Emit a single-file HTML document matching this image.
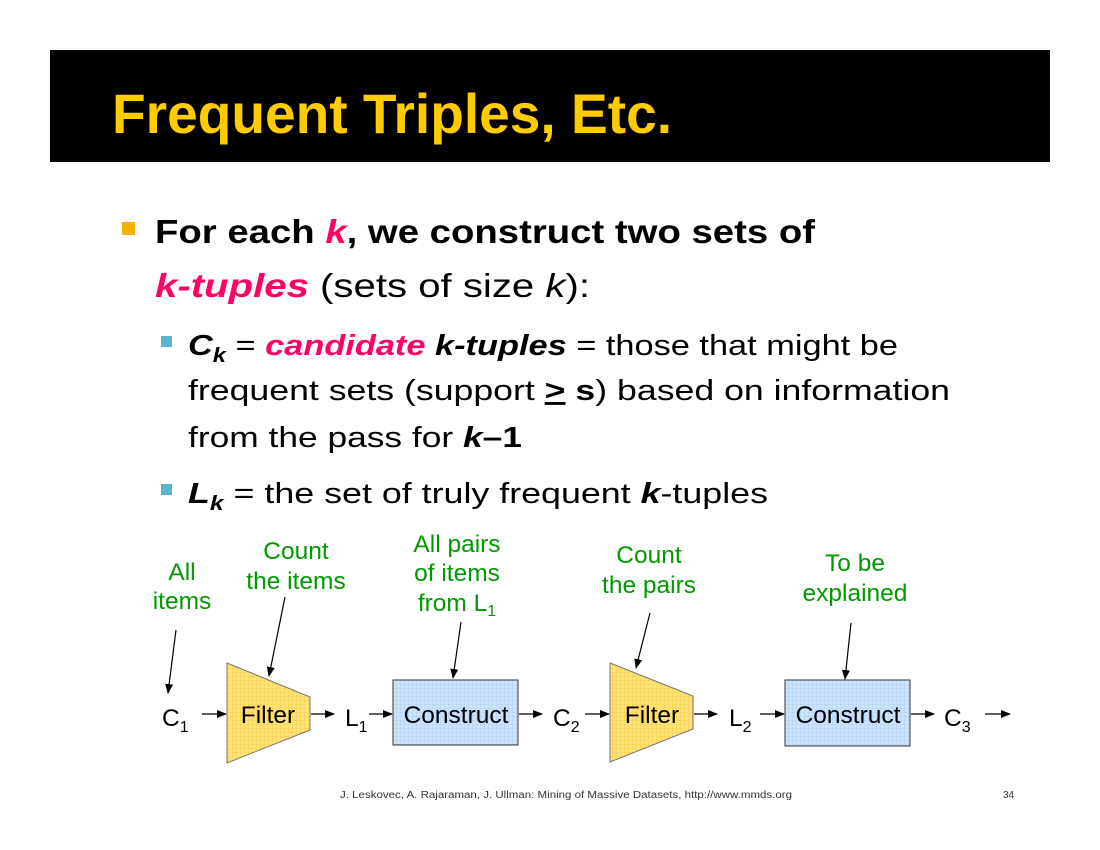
<!DOCTYPE html>
<html><head><meta charset="utf-8"><style>
html,body{margin:0;padding:0;background:#fff;}
svg{display:block;font-family:"Liberation Sans",sans-serif;}
</style></head><body>
<svg width="1100" height="850" viewBox="0 0 1100 850" xmlns="http://www.w3.org/2000/svg">
<defs>
<pattern id="gy" width="4" height="4" patternUnits="userSpaceOnUse"><rect width="4" height="4" fill="#FFE27A"/><path d="M0 0H4M0 0V4" stroke="#F2C230" stroke-width="0.6"/></pattern>
<pattern id="gb" width="4" height="4" patternUnits="userSpaceOnUse"><rect width="4" height="4" fill="#CDE3FB"/><path d="M0 0H4M0 0V4" stroke="#9CC4F0" stroke-width="0.6"/></pattern>
<marker id="ar" markerWidth="10" markerHeight="8" refX="9" refY="4" orient="auto" markerUnits="userSpaceOnUse"><path d="M0 0L10 4L0 8z" fill="#000"/></marker>
</defs>
<rect x="50" y="50" width="1000" height="112" fill="#000"/>
<text x="112" y="133" font-size="56" font-weight="bold" fill="#FFCC00" textLength="560" lengthAdjust="spacingAndGlyphs">Frequent Triples, Etc.</text>

<rect x="122" y="222" width="13" height="13" fill="#F2B200"/>
<text x="155" y="243" font-size="33" font-weight="bold" textLength="660" lengthAdjust="spacingAndGlyphs">For each <tspan fill="#FF0066" font-style="italic">k</tspan>, we construct two sets of</text>
<text x="155" y="297" font-size="33" textLength="435" lengthAdjust="spacingAndGlyphs"><tspan fill="#FF0066" font-style="italic" font-weight="bold">k-tuples</tspan>  (sets of size <tspan font-style="italic">k</tspan>):</text>

<rect x="161" y="336" width="11" height="11" fill="#5BB4CF"/>
<text x="188" y="355" font-size="29" textLength="710" lengthAdjust="spacingAndGlyphs"><tspan font-weight="bold" font-style="italic">C<tspan font-size="20" dy="7">k</tspan></tspan><tspan dy="-7"> = </tspan><tspan fill="#FF0066" font-weight="bold" font-style="italic">candidate</tspan> <tspan font-weight="bold" font-style="italic">k-tuples</tspan> = those that might be</text>
<text x="188" y="400" font-size="29" textLength="762" lengthAdjust="spacingAndGlyphs">frequent sets (support <tspan font-weight="bold" text-decoration="underline">&gt;</tspan> <tspan font-weight="bold">s</tspan>) based on information</text>
<text x="188" y="447" font-size="29" textLength="334" lengthAdjust="spacingAndGlyphs">from the pass for <tspan font-weight="bold" font-style="italic">k</tspan><tspan font-weight="bold">–1</tspan></text>

<rect x="161" y="484" width="11" height="11" fill="#5BB4CF"/>
<text x="188" y="503" font-size="29" textLength="580" lengthAdjust="spacingAndGlyphs"><tspan font-weight="bold" font-style="italic">L<tspan font-size="20" dy="7">k</tspan></tspan><tspan dy="-7"> = the set of truly frequent </tspan><tspan font-weight="bold" font-style="italic">k</tspan>-tuples</text>

<g font-size="24.5" fill="#009900" text-anchor="middle">
<text x="182" y="580">All</text><text x="182" y="609">items</text>
<text x="296" y="559">Count</text><text x="296" y="589">the items</text>
<text x="457" y="552">All pairs</text><text x="457" y="581">of items</text><text x="457" y="611">from L<tspan font-size="16" dy="5">1</tspan></text>
<text x="649" y="563">Count</text><text x="649" y="593">the pairs</text>
<text x="855" y="571">To be</text><text x="855" y="601">explained</text>
</g>

<g stroke="#000" stroke-width="1.2" fill="none" marker-end="url(#ar)">
<line x1="176" y1="630" x2="168" y2="693"/>
<line x1="285" y1="597" x2="269" y2="676"/>
<line x1="461" y1="622" x2="453" y2="678"/>
<line x1="650" y1="613" x2="636" y2="668"/>
<line x1="851" y1="623" x2="845" y2="679"/>
<line x1="202" y1="714" x2="226" y2="714"/>
<line x1="311" y1="714" x2="334" y2="714"/>
<line x1="369" y1="714" x2="392" y2="714"/>
<line x1="519" y1="714" x2="542" y2="714"/>
<line x1="585" y1="714" x2="609" y2="714"/>
<line x1="694" y1="714" x2="717" y2="714"/>
<line x1="760" y1="714" x2="784" y2="714"/>
<line x1="911" y1="714" x2="934" y2="714"/>
<line x1="985" y1="714" x2="1010" y2="714"/>
</g>

<polygon points="227,663 310,697 310,730 227,763" fill="url(#gy)" stroke="#777" stroke-width="1"/>
<polygon points="610,663 693,696 693,729 610,762" fill="url(#gy)" stroke="#777" stroke-width="1"/>
<rect x="393" y="680" width="125" height="65" fill="url(#gb)" stroke="#333" stroke-width="1"/>
<rect x="785" y="680" width="125" height="66" fill="url(#gb)" stroke="#333" stroke-width="1"/>

<g font-size="24.5" fill="#000">
<text x="162" y="726">C<tspan font-size="16" dy="6">1</tspan></text>
<text x="268" y="723" text-anchor="middle">Filter</text>
<text x="345" y="726">L<tspan font-size="16" dy="6">1</tspan></text>
<text x="456" y="723" text-anchor="middle">Construct</text>
<text x="553" y="726">C<tspan font-size="16" dy="6">2</tspan></text>
<text x="652" y="723" text-anchor="middle">Filter</text>
<text x="729" y="726">L<tspan font-size="16" dy="6">2</tspan></text>
<text x="848" y="723" text-anchor="middle">Construct</text>
<text x="944" y="726">C<tspan font-size="16" dy="6">3</tspan></text>
</g>

<text x="566" y="798" font-size="10" fill="#333" text-anchor="middle" textLength="452" lengthAdjust="spacingAndGlyphs">J. Leskovec, A. Rajaraman, J. Ullman: Mining of Massive Datasets, http://www.mmds.org</text>
<text x="1003" y="798" font-size="10" fill="#333">34</text>
</svg>
</body></html>
